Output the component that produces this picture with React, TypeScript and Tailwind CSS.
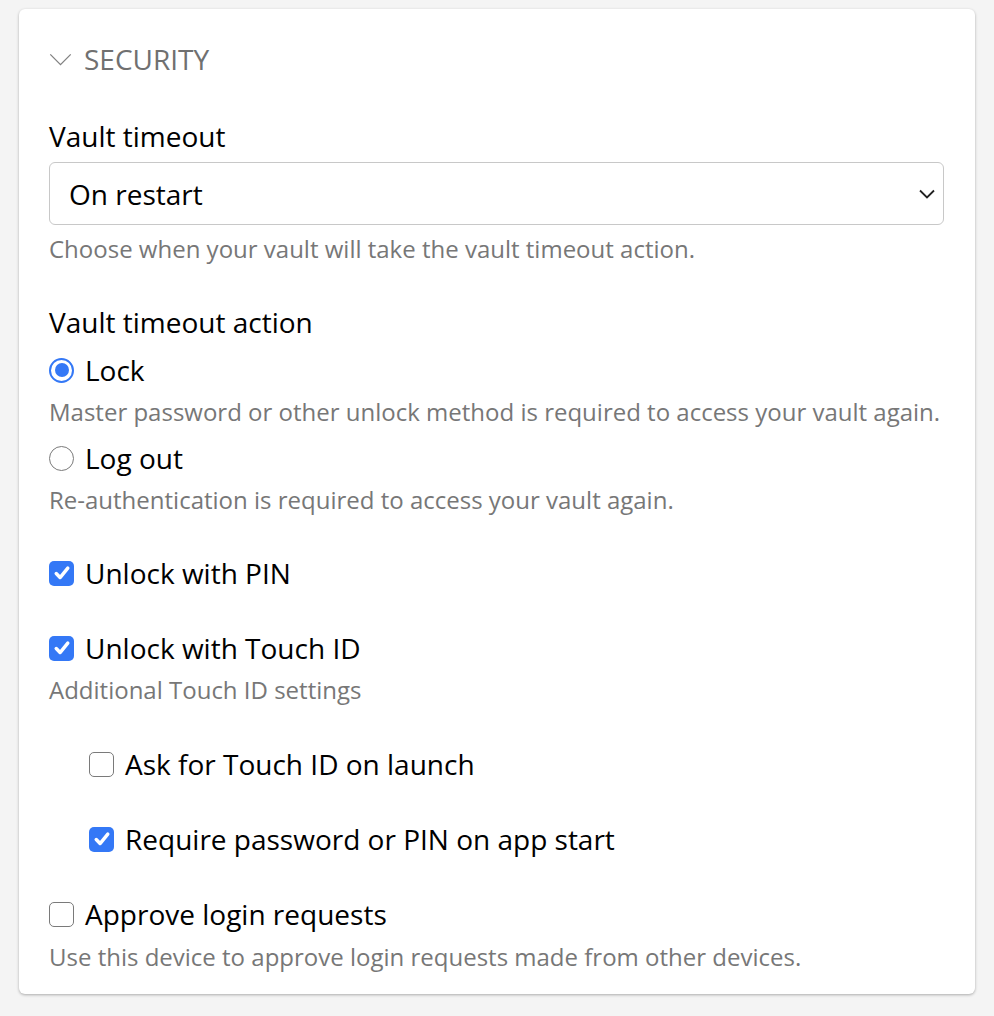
const font = { fontFamily: '"Open Sans", "Noto Sans", sans-serif' }

const Check = ({ checked }: { checked: boolean }) =>
  checked ? (
    <span className="flex h-[25px] w-[25px] shrink-0 items-center justify-center rounded-[5px] bg-[#3478f6]">
      <svg viewBox="0 0 16 16" className="h-[22px] w-[22px]" fill="none">
        <path d="M3.8 8.4l2.8 2.9 5.6-6.8" stroke="white" strokeWidth="2.5" strokeLinecap="round" strokeLinejoin="round" />
      </svg>
    </span>
  ) : (
    <span className="h-[25px] w-[25px] shrink-0 rounded-[5px] border-[1.5px] border-[#7a7a7a] bg-white" />
  )

const Radio = ({ checked }: { checked: boolean }) =>
  checked ? (
    <span className="flex h-[25px] w-[25px] shrink-0 items-center justify-center rounded-full border-[2px] border-[#3478f6] bg-white">
      <span className="h-[14px] w-[14px] rounded-full bg-[#3478f6]" />
    </span>
  ) : (
    <span className="h-[25px] w-[25px] shrink-0 rounded-full border-[1.5px] border-[#7a7a7a] bg-white" />
  )

const Helper = ({ className, children }: { className: string; children: string }) => (
  <p className={`h-[30px] text-[24px] leading-[30px] text-[#777] ${className}`}>{children}</p>
)

const Row = ({ className, children }: { className: string; children: React.ReactNode }) => (
  <div className={`flex h-[36px] items-center gap-[11px] text-[28px] leading-[36px] text-black ${className}`}>{children}</div>
)

export default function App() {
  return (
    <div className="min-h-[1016px] bg-[#f4f4f4] pl-[19px] pr-[19px] pt-[9px]" style={font}>
      <div className="rounded-[6px] bg-white pl-[30px] pr-[31px] pt-[32px] pb-[22px] shadow-[0_1px_3px_rgba(0,0,0,0.3)]">
        <div className="flex h-[36px] items-center gap-[12px] text-[28px] leading-[36px] text-[#707070]">
          <svg viewBox="0 0 24 14" className="h-[13px] w-[23px]" fill="none">
            <path d="M1 1.5l11 11 11-11" stroke="#808080" strokeWidth="1.4" />
          </svg>
          <span>SECURITY</span>
        </div>

        <p className="mt-[41px] h-[36px] text-[28px] leading-[36px] text-black">Vault timeout</p>
        <div className="mt-[8px] flex h-[63px] items-center justify-between rounded-[6px] border border-[#c8c8c8] pl-[19px] pr-[8px]">
          <span className="text-[28px] leading-[36px] text-black">On restart</span>
          <svg viewBox="0 0 16 10" className="h-[10px] w-[16px]" fill="none">
            <path d="M1 1.5l7 7 7-7" stroke="#222" strokeWidth="1.8" />
          </svg>
        </div>
        <Helper className="mt-[9px]">Choose when your vault will take the vault timeout action.</Helper>

        <p className="mt-[40px] h-[36px] text-[28px] leading-[36px] text-black">Vault timeout action</p>
        <Row className="mt-[12px]">
          <Radio checked />
          <span>Lock</span>
        </Row>
        <Helper className="mt-[9px]">Master password or other unlock method is required to access your vault again.</Helper>
        <Row className="mt-[13px]">
          <Radio checked={false} />
          <span>Log out</span>
        </Row>
        <Helper className="mt-[9px]">Re-authentication is required to access your vault again.</Helper>

        <Row className="mt-[40px]">
          <Check checked />
          <span>Unlock with PIN</span>
        </Row>
        <Row className="mt-[39px]">
          <Check checked />
          <span>Unlock with Touch ID</span>
        </Row>
        <Helper className="mt-[9px]">Additional Touch ID settings</Helper>

        <div className="pl-[40px]">
          <Row className="mt-[41px]">
            <Check checked={false} />
            <span>Ask for Touch ID on launch</span>
          </Row>
          <Row className="mt-[39px]">
            <Check checked />
            <span>Require password or PIN on app start</span>
          </Row>
        </div>

        <Row className="mt-[39px]">
          <Check checked={false} />
          <span>Approve login requests</span>
        </Row>
        <Helper className="mt-[10px]">Use this device to approve login requests made from other devices.</Helper>
      </div>
    </div>
  )
}
